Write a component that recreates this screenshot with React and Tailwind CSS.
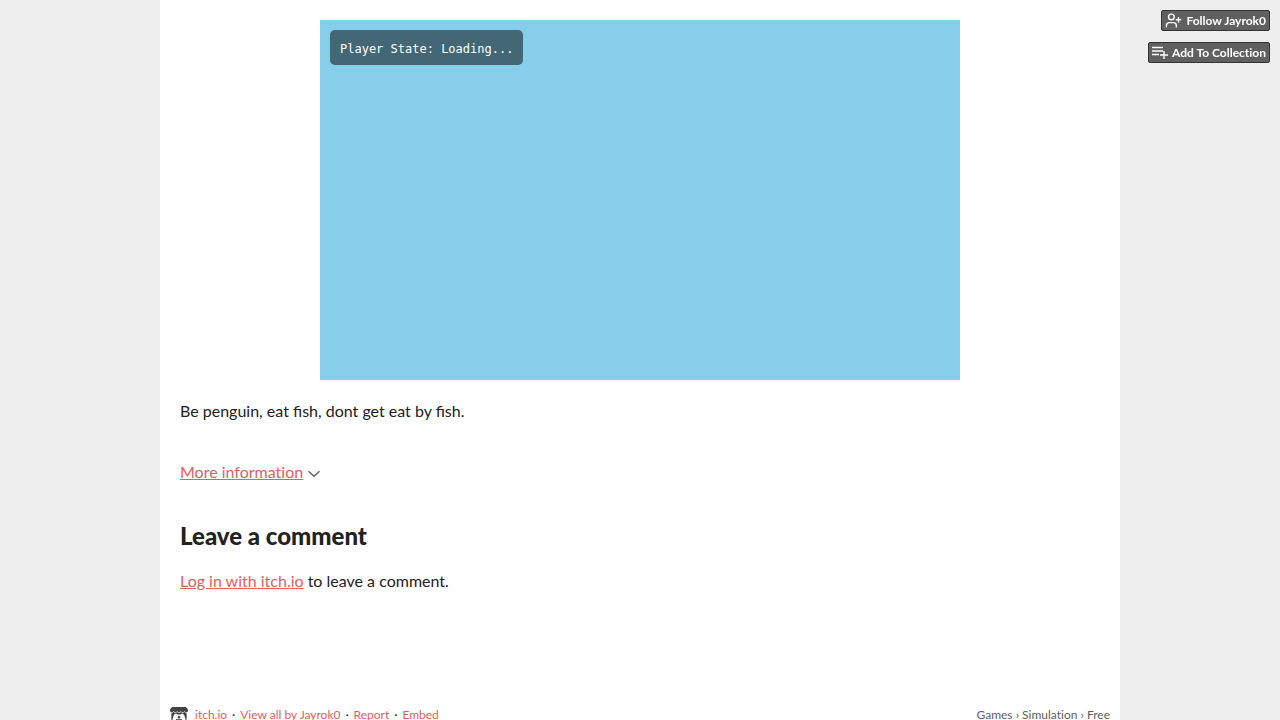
import React, { useState } from "react";
import { UserPlus } from "lucide-react";
import { SiItchdotio } from "react-icons/si";

const footerLinks = ["itch.io", "View all by Jayrok0", "Report", "Embed"];
const breadcrumbs = ["Games", "Simulation", "Free"];

function CollectionIcon() {
  return (
    <svg width="16" height="16" viewBox="0 0 16 16" fill="none" stroke="currentColor" strokeWidth="1.4" aria-hidden="true">
      <path d="M0 2.5h11M0 6h11M0 9.5h7M12 6v8M8 10h8" />
    </svg>
  );
}

function ToolButton({ icon, children }) {
  return (
    <button
      type="button"
      className="flex h-[21px] items-center gap-1 rounded-xs border border-[#333333] bg-[#606060] px-[3px] text-xs font-bold text-white"
    >
      {icon}
      <span>{children}</span>
    </button>
  );
}

export default function App() {
  const [open, setOpen] = useState(false);

  return (
    <div className="min-h-screen bg-[#eeeeee] font-['Lato',sans-serif] text-base text-[#222222] [font-variant-ligatures:none]">
      {/* User tools */}
      <div className="fixed top-[10px] right-[10px] flex flex-col items-end gap-[11px]">
        <ToolButton icon={<UserPlus size={17} strokeWidth={2} />}>Follow Jayrok0</ToolButton>
        <ToolButton icon={<CollectionIcon />}>Add To Collection</ToolButton>
      </div>

      <div className="mx-auto max-w-[960px] bg-white">
        <main className="p-5">
          {/* Game frame */}
          <div className="mx-auto aspect-video max-w-[640px] bg-[#87ceeb] p-[10px]">
            <div className="w-fit rounded-[5px] bg-[#436775] px-[10px] pt-[11px] pb-2 font-['DejaVu_Sans_Mono',monospace] text-xs leading-4 text-white">
              Player State: Loading...
            </div>
          </div>

          <p className="mt-5 leading-[22px] [font-variant-ligatures:normal]">Be penguin, eat fish, dont get eat by fish.</p>

          <div className="mt-[38px] flex items-center gap-1 leading-6">
            <button type="button" onClick={() => setOpen(!open)} aria-expanded={open} className="text-[#de6060] underline">
              More information
            </button>
            <svg width="14" height="14" viewBox="0 0 14 14" fill="none" stroke="#606060" strokeWidth="1.4" aria-hidden="true">
              <path d="M1.5 6.2l5.5 5 5.5-5" />
            </svg>
          </div>

          <h2 className="mt-9 text-2xl leading-8 font-black">Leave a comment</h2>
          <p className="mt-[18px] leading-[22px]">
            <a href="#login" className="text-[#de6060] underline">Log in with itch.io</a> to leave a comment.
          </p>
        </main>

        <footer className="mt-[93px] flex items-center justify-between px-[10px] pb-[10px] text-xs leading-5">
          <div className="flex items-center">
            <SiItchdotio size={18} color="#434343" className="mr-[7px]" aria-hidden="true" />
            {footerLinks.map((label, idx) => (
              <React.Fragment key={label}>
                {idx > 0 && <span className="px-[5px]">·</span>}
                <a href="#" className="text-[#de6060]">{label}</a>
              </React.Fragment>
            ))}
          </div>
          <nav className="text-[#606060]">
            {breadcrumbs.map((label, idx) => (
              <React.Fragment key={label}>
                {idx > 0 && " › "}
                <a href="#">{label}</a>
              </React.Fragment>
            ))}
          </nav>
        </footer>
      </div>
    </div>
  );
}
